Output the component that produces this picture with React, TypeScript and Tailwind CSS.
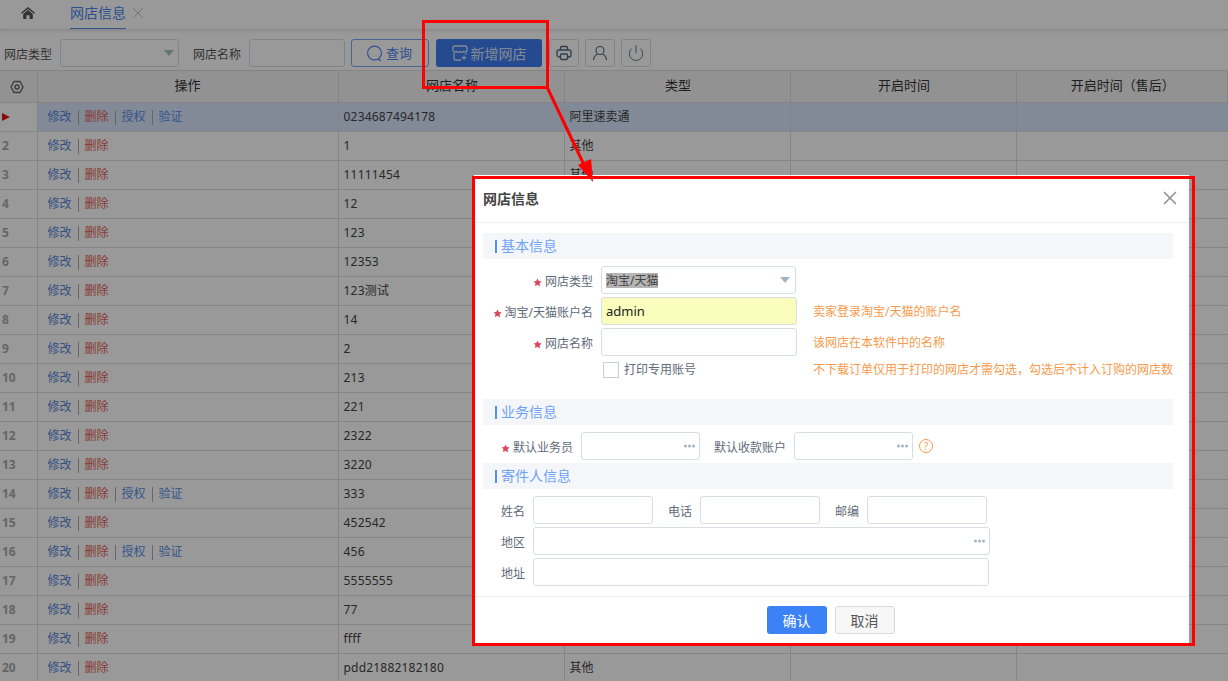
import React from 'react';
import { Power, X } from 'lucide-react';

// rows 4-19 have their type column hidden behind the dialog
const shopRows = [
  { no: '', name: '0234687494178', type: '阿里速卖通', auth: true },
  { no: '2', name: '1', type: '其他' },
  { no: '3', name: '11111454', type: '其他' },
  { no: '4', name: '12' },
  { no: '5', name: '123' },
  { no: '6', name: '12353' },
  { no: '7', name: '123测试' },
  { no: '8', name: '14' },
  { no: '9', name: '2' },
  { no: '10', name: '213' },
  { no: '11', name: '221' },
  { no: '12', name: '2322' },
  { no: '13', name: '3220' },
  { no: '14', name: '333', auth: true },
  { no: '15', name: '452542' },
  { no: '16', name: '456', auth: true },
  { no: '17', name: '5555555' },
  { no: '18', name: '77' },
  { no: '19', name: 'ffff' },
  { no: '20', name: 'pdd21882182180', type: '其他' },
];

const headers = ['网店名称', '类型', '开启时间', '开启时间（售后）'];

const Star = () => (
  <svg viewBox="0 0 24 24" className="h-[9px] w-[9px] shrink-0 fill-[#d9485f]">
    <path d="M12 1l3.400 7.200 7.600 1-5.600 5.400 1.500 7.900L12 17.800l-6.900 3.700 1.500-7.900L1 9.200l7.600-1z" />
  </svg>
);

const Dots = () => (
  <span className="absolute right-[4px] top-1/2 flex -translate-y-1/2 gap-[1px]">
    <i className="h-[3px] w-[3px] rounded-full bg-[#a3b4c4]" />
    <i className="h-[3px] w-[3px] rounded-full bg-[#a3b4c4]" />
    <i className="h-[3px] w-[3px] rounded-full bg-[#a3b4c4]" />
  </span>
);

const Section = ({ title }: { title: string }) => (
  <div className="flex h-[26px] items-center bg-[#f4f6fa] pb-[2px] pl-[12px] text-[14px] text-[#6ea3f7]">
    <span className="mr-[4px] mt-[2px] h-[13px] w-[2px] bg-[#4d90f8]" />
    {title}
  </div>
);

const Field = ({ className, children }: { className: string; children?: React.ReactNode }) => (
  <div className={`relative h-[28px] shrink-0 rounded-[3px] border border-[#d8dde6] ${className}`}>{children}</div>
);

const Label = ({ className, star, children }: { className: string; star?: boolean; children: React.ReactNode }) => (
  <div className={`flex shrink-0 items-center justify-end gap-[3px] whitespace-nowrap pt-[4px] text-[12px] text-[#5f6b78] ${className}`}>
    {star && <Star />}
    {children}
  </div>
);

const Toolbtn = ({ children }: { children: React.ReactNode }) => (
  <button className="flex h-[28px] w-[30px] items-center justify-center rounded-[3px] border border-[#d5d9e0] bg-white text-[#52677d]">
    {children}
  </button>
);

const Sep = () => <span className="mx-[6px] h-[15px] w-px bg-[#aaa]" />;

export default function App() {
  return (
    <div
      className="relative h-[681px] w-[1228px] overflow-hidden bg-white text-[12px] text-[#333]"
      style={{ fontFamily: '"Noto Sans", "Noto Sans CJK SC", sans-serif' }}
    >
      {/* Tabs */}
      <div className="flex h-[30px] items-start border-b border-[#e5e5e5] bg-white pl-[21px] shadow-[0_1px_3px_rgba(0,0,0,0.1)]">
        <svg viewBox="0 0 14 12" className="mt-[7px] h-[12px] w-[14px] fill-[#555]">
          <path d="M7 0l7 5.800-.9 1L7 1.900.9 6.800 0 5.800z" />
          <path d="M7 3l4.800 3.900V12H8.600V8.200H5.400V12H2.200V6.900z" />
        </svg>
        <div className="ml-[35px] flex h-[29px] items-center border-b border-[#5b8de8] pb-[3px] text-[14px] text-[#4a86f0]">网店信息</div>
        <X className="ml-[3px] mt-[4px] h-[18px] w-[18px] text-[#aaa]" strokeWidth={1} />
      </div>

      {/* Toolbar */}
      <div className="flex h-[40px] items-start pl-[4px] pt-[9px]">
        <span className="pt-[7px] text-[#555]">网店类型</span>
        <Field className="ml-[8px] w-[119px] bg-white">
          <span className="absolute right-[4px] top-[10px] h-0 w-0 border-x-[5px] border-t-[6px] border-x-transparent border-t-[#a8c5b8]" />
        </Field>
        <span className="ml-[14px] pt-[7px] text-[#555]">网店名称</span>
        <Field className="ml-[8px] w-[96px] bg-white" />
        <button className="ml-[6px] flex h-[28px] w-[78px] items-center justify-center gap-[3px] rounded-[3px] border border-[#7aa5f5] bg-white pr-[2px] text-[13px] text-[#4a86f0]">
          <svg viewBox="0 0 16 16" className="h-[17px] w-[17px] fill-none stroke-current" strokeWidth="1.100">
            <circle cx="8" cy="7.500" r="6.500" />
            <path d="M11.500 13.200l2.500 1.800" />
          </svg>
          <span className="pt-[2px]">查询</span>
        </button>
        <button className="ml-[7px] flex h-[28px] w-[106px] items-center justify-center gap-[3px] rounded-[3px] bg-[#3f7cf0] text-[14px] text-[#dbe6fb]">
          <svg viewBox="0 0 16 16" className="h-[16px] w-[16px] fill-none stroke-current" strokeWidth="1.300">
            <path d="M3 1h10a2 2 0 0 1 2 2v2.500a2.200 2.200 0 0 1-3.500 1 2.500 2.500 0 0 1-3.500 0 2.500 2.500 0 0 1-3.500 0A2.200 2.200 0 0 1 1 5.500V3a2 2 0 0 1 2-2z" />
            <path d="M2 8v5a2 2 0 0 0 2 2h5M14 8v1.500M12 10.500v4.500M9.500 12.700h5" />
          </svg>
          新增网店
        </button>
        <div className="ml-[7px] flex gap-[6px]">
          <Toolbtn>
            <svg viewBox="0 0 16 16" className="h-[16px] w-[16px] fill-none stroke-current" strokeWidth="1.300">
              <path d="M4.500 5V2.500a1 1 0 0 1 1-1h5a1 1 0 0 1 1 1V5" />
              <path d="M4.500 12H3a2 2 0 0 1-2-2V7a2 2 0 0 1 2-2h10a2 2 0 0 1 2 2v3a2 2 0 0 1-2 2h-1.500" />
              <rect x="4.500" y="9" width="7" height="5.500" rx="1" />
            </svg>
          </Toolbtn>
          <Toolbtn>
            <svg viewBox="0 0 16 16" className="h-[16px] w-[16px] fill-none stroke-current" strokeWidth="1.100">
              <circle cx="8" cy="5.500" r="4" />
              <path d="M1.500 15c.6-3.500 2.900-5.500 4-5.800M14.500 15c-.6-3.500-2.900-5.500-4-5.800" />
            </svg>
          </Toolbtn>
          <Toolbtn><Power className="h-[18px] w-[18px]" strokeWidth={1.2} /></Toolbtn>
        </div>
      </div>

      {/* Grid */}
      <table className="w-[1228px] table-fixed border-collapse">
        <colgroup>
          <col className="w-[37px]" />
          <col className="w-[301px]" />
          <col className="w-[226px]" />
          <col className="w-[226px]" />
          <col className="w-[226px]" />
          <col />
        </colgroup>
        <thead>
          <tr className="h-[32px] border-y border-[#dcdcdc] bg-[#f3f3f3] text-[13px]">
            <th className="border-r border-[#dcdcdc] pr-[3px] font-normal">
              <svg viewBox="0 0 14 14" className="mx-auto h-[14px] w-[14px] fill-none stroke-[#666]" strokeWidth="1.400" strokeLinejoin="round">
                <path d="M4 1.500h6L13 7l-3 5.500H4L1 7z" />
                <circle cx="7" cy="7" r="2" />
              </svg>
            </th>
            <th className="border-r border-[#dcdcdc] pb-[2px] font-normal">操作</th>
            {headers.map((h) => (
              <th key={h} className="border-r border-[#dcdcdc] pb-[2px] pl-[2px] font-normal">{h}</th>
            ))}
          </tr>
        </thead>
        <tbody>
          {shopRows.map((row, i) => (
            <tr key={i} className={`h-[29px] border-b border-[#dedede] ${i === 0 ? 'bg-[#d8e6fb]' : ''}`}>
              <td className={`border-r border-[#dedede] pl-[2px] text-[12px] font-bold text-[#aaa] ${i === 0 ? 'bg-white' : ''}`}>
                {i === 0 ? (
                  <span className="block h-0 w-0 border-y-[4px] border-l-[8px] border-y-transparent border-l-[#e0141c]" />
                ) : (
                  row.no
                )}
              </td>
              <td className="border-r border-[#dedede] pl-[10px]">
                <div className="flex items-center">
                  <span className="text-[#5a86d8]">修改</span>
                  <Sep />
                  <span className="text-[#e5604f]">删除</span>
                  {row.auth && (
                    <>
                      <Sep />
                      <span className="text-[#5a8fe8]">授权</span>
                      <Sep />
                      <span className="text-[#5a8fe8]">验证</span>
                    </>
                  )}
                </div>
              </td>
              <td className="border-r border-[#dedede] pl-[5px] tracking-[0.2px] text-[#444]">{row.name}</td>
              <td className="border-r border-[#dedede] pl-[5px] text-[#444]">{row.type}</td>
              <td className="border-r border-[#dedede]" />
              <td />
            </tr>
          ))}
        </tbody>
      </table>

      {/* Mask */}
      <div className="absolute inset-0 bg-black/40" />

      {/* Dialog */}
      <div className="absolute left-[474px] top-[175px] flex h-[468px] w-[715px] flex-col bg-white">
        <div className="flex h-[48px] shrink-0 items-center justify-between border-b border-[#eceef4] pl-[9px] pr-[8px]">
          <span className="text-[14px] font-bold text-[#444]">网店信息</span>
          <X className="mb-[2px] h-[22px] w-[22px] text-[#8f949c]" strokeWidth={1.8} />
        </div>

        <div className="flex-1 pl-[9px] pr-[16px] pt-[10px]">
          <Section title="基本信息" />
          <div className="mt-[7px] flex items-center">
            <Label className="w-[110px]" star>网店类型</Label>
            <Field className="ml-[8px] flex w-[195px] items-center bg-white pl-[4px] pt-[1px] text-[#444]">
              <span className="bg-[#b5b5b5] text-[12px] leading-[15px]">淘宝/天猫</span>
              <span className="absolute right-[5px] top-[10px] h-0 w-0 border-x-[5px] border-t-[6px] border-x-transparent border-t-[#a3b4c4]" />
            </Field>
          </div>
          <div className="mt-[3px] flex items-center">
            <Label className="w-[110px]" star>淘宝/天猫账户名</Label>
            <Field className="ml-[8px] flex w-[196px] items-center bg-[#fbfdbd] pl-[4px] pt-[1px] text-[13px] text-[#222]">admin</Field>
            <span className="ml-[16px] pt-[2px] text-[#f79a4c]">卖家登录淘宝/天猫的账户名</span>
          </div>
          <div className="mt-[3px] flex items-center">
            <Label className="w-[110px]" star>网店名称</Label>
            <Field className="ml-[8px] w-[196px] bg-white" />
            <span className="ml-[16px] pt-[2px] text-[#f79a4c]">该网店在本软件中的名称</span>
          </div>
          <div className="mt-[3px] flex h-[22px] items-center">
            <span className="ml-[120px] h-[16px] w-[16px] border border-[#c9ced6]" />
            <span className="ml-[5px] w-[189px] text-[#5f6b78]">打印专用账号</span>
            <span className="whitespace-nowrap text-[#f79a4c]">不下载订单仅用于打印的网店才需勾选，勾选后不计入订购的网店数</span>
          </div>

          <div className="mt-[18px]">
            <Section title="业务信息" />
          </div>
          <div className="mt-[7px] flex items-center">
            <Label className="w-[90px]" star>默认业务员</Label>
            <Field className="ml-[8px] w-[119px] bg-white"><Dots /></Field>
            <Label className="ml-[14px] w-[72px]">默认收款账户</Label>
            <Field className="ml-[8px] w-[119px] bg-white"><Dots /></Field>
            <span className="ml-[6px] flex h-[14px] w-[14px] items-center justify-center rounded-full border border-[#f79a4c] text-[10px] leading-none text-[#f79a4c]">?</span>
          </div>
          <div className="mt-[3px]">
            <Section title="寄件人信息" />
          </div>
          <div className="mt-[7px] flex items-center">
            <Label className="w-[42px]">姓名</Label>
            <Field className="ml-[8px] w-[120px] bg-white" />
            <Label className="ml-[15px] w-[24px]">电话</Label>
            <Field className="ml-[8px] w-[120px] bg-white" />
            <Label className="ml-[15px] w-[24px]">邮编</Label>
            <Field className="ml-[8px] w-[120px] bg-white" />
          </div>
          <div className="mt-[3px] flex items-center">
            <Label className="w-[42px]">地区</Label>
            <Field className="ml-[8px] w-[457px] bg-white"><Dots /></Field>
          </div>
          <div className="mt-[3px] flex items-center">
            <Label className="w-[42px]">地址</Label>
            <Field className="ml-[8px] w-[456px] bg-white" />
          </div>
        </div>

        <div className="flex h-[47px] shrink-0 items-start justify-center gap-[8px] border-t border-[#eceef0] pr-[2px] pt-[9px]">
          <button className="h-[28px] w-[60px] rounded-[3px] bg-[#3b82f6] text-[14px] text-white">确认</button>
          <button className="h-[28px] w-[60px] rounded-[3px] border border-[#d8d8d8] bg-[#f7f7f7] text-[14px] text-[#555]">取消</button>
        </div>
      </div>

      {/* Callouts */}
      <div className="absolute left-[422px] top-[20px] h-[69px] w-[127px] border-[3px] border-[#ff0000]" />
      <div className="absolute left-[472px] top-[176px] h-[470px] w-[723px] border-[3px] border-[#ff0000]" />
      <svg className="absolute left-[540px] top-[85px] h-[100px] w-[60px]" viewBox="0 0 60 100">
        <path d="M7 2L46 84" stroke="#ff0000" strokeWidth="3" fill="none" />
        <path d="M53 97L38 80L51 74z" fill="#ff0000" />
      </svg>
    </div>
  );
}
